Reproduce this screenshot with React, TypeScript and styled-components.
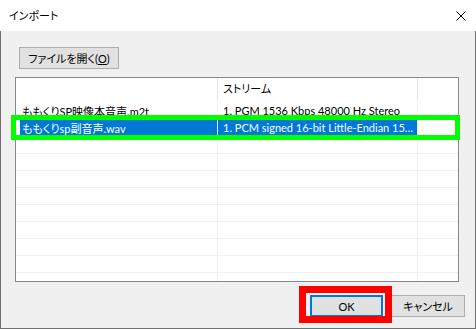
import React from 'react';
import styled, { createGlobalStyle } from 'styled-components';

interface FileRow {
    name: string;
    stream: string;
    selected?: boolean;
}

const files: FileRow[] = [
    { name: 'ももくりSP映像本音声.m2t', stream: '1. PGM 1536 Kbps 48000 Hz Stereo' },
    { name: 'ももくりsp副音声.wav', stream: '1. PCM signed 16-bit Little-Endian 15…', selected: true },
];

const ROW_COUNT = 11;

const App: React.FC = () => {
    const rows: FileRow[] = [...files];
    while (rows.length < ROW_COUNT) {
        rows.push({ name: '', stream: '' });
    }

    return (
        <>
            <GlobalStyle />
            <Window>
                <TitleBar>
                    <Title>インポート</Title>
                    <CloseButton aria-label="閉じる">
                        <svg width="10" height="10" viewBox="0 0 10 10">
                            <path d="M0.5 0.5 L9.5 9.5 M9.5 0.5 L0.5 9.5" stroke="#000" strokeWidth="1" />
                        </svg>
                    </CloseButton>
                </TitleBar>

                <Body>
                    <OpenButton>
                        ファイルを開く(<u>O</u>)
                    </OpenButton>

                    <ListBox>
                        <HeaderRow>
                            <HeaderCell />
                            <HeaderCell>ストリーム</HeaderCell>
                            <HeaderCell />
                        </HeaderRow>

                        {rows.map((row, key) =>
                            <Row key={key}>
                                <NameCell>
                                    <CellText $selected={row.selected}>{row.name}</CellText>
                                </NameCell>
                                <StreamCell>
                                    <CellText $selected={row.selected} $pad={5}>{row.stream}</CellText>
                                </StreamCell>
                                <EmptyCell />
                            </Row>
                        )}
                    </ListBox>

                    <Footer>
                        <PushButton $default>OK</PushButton>
                        <PushButton>キャンセル</PushButton>
                    </Footer>
                </Body>

                <Marker $color="#00ff00" $left={11} $top={115} $width={449} $height={25} $thickness={5} />
                <Marker $color="#ff0000" $left={299} $top={286} $width={93} $height={37} $thickness={7} />
            </Window>
        </>
    );
};

const uiFont = `"Lato", "Noto Sans CJK JP", sans-serif`;

const GlobalStyle = createGlobalStyle`
    html, body {
        margin: 0;
        padding: 0;
        background: #ffffff;
    }

    body {
        font-family: ${uiFont};
        font-size: 11px;
        color: #000000;
    }
`;

const Window = styled.div`
    position: relative;
    display: flex;
    flex-direction: column;
    width: 476px;
    height: 329px;
    box-sizing: border-box;
    overflow: hidden;
`;

const TitleBar = styled.div`
    display: flex;
    align-items: center;
    justify-content: space-between;
    height: 31px;
    padding: 0 10px 1px 9px;
    box-sizing: border-box;
    background: #ffffff;
`;

const Title = styled.span`
    font-family: "Noto Sans CJK JP", sans-serif;
    font-feature-settings: "palt";
    font-size: 11px;
`;

const CloseButton = styled.span`
    display: flex;
    width: 10px;
    height: 10px;
    margin-top: 1px;
`;

const Body = styled.div`
    flex: 1;
    display: flex;
    flex-direction: column;
    padding: 16px 10px 0 14px;
    background: #f0f0f0;
    border: 1px solid #6f6f6f;
    border-top: none;
`;

const buttonBase = `
    display: flex;
    align-items: center;
    justify-content: center;
    height: 22px;
    box-sizing: border-box;
    padding: 0;
    background: #e1e1e1;
    font-family: ${uiFont};
    font-feature-settings: "palt";
    font-size: 11px;
    color: #000000;
`;

const OpenButton = styled.button`
    ${buttonBase}
    width: 100px;
    margin-left: 4px;
    border: 1px solid #adadad;

    u {
        text-underline-offset: 1px;
    }
`;

const ListBox = styled.div`
    height: 205px;
    margin-top: 8px;
    width: 444px;
    box-sizing: border-box;
    border: 1px solid #828790;
    background: #ffffff;
    overflow: hidden;
`;

const columns = `
    display: grid;
    grid-template-columns: 202px 200px 1fr;
`;

const HeaderRow = styled.div`
    ${columns}
    height: 25px;
`;

const HeaderCell = styled.div`
    display: flex;
    align-items: center;
    padding: 0 0 2px 5px;
    border-right: 1px solid #e5e5e5;
    margin-bottom: 3px;
    font-family: "Noto Sans CJK JP", sans-serif;
    font-feature-settings: "palt";

    &:last-child {
        border-right: none;
    }
`;

const Row = styled.div`
    ${columns}
    height: 17px;
    box-sizing: border-box;
    border-bottom: 1px solid #f0f0f0;
`;

const NameCell = styled.div`
    display: flex;
    padding-left: 4px;
    border-right: 1px solid #f0f0f0;
    min-width: 0;
`;

const StreamCell = styled.div`
    display: flex;
    border-right: 1px solid #f0f0f0;
    min-width: 0;
`;

const EmptyCell = styled.div``;

const CellText = styled.span<{ $selected?: boolean; $pad?: number }>`
    flex: 1;
    display: flex;
    align-items: center;
    height: 17px;
    margin-top: -1px;
    padding-left: ${p => p.$pad ?? 2}px;
    white-space: nowrap;
    overflow: hidden;
    font-feature-settings: "palt";
    background: ${p => p.$selected ? '#0078d7' : 'transparent'};
    color: ${p => p.$selected ? '#ffffff' : '#000000'};
`;

const Footer = styled.div`
    display: flex;
    justify-content: flex-end;
    gap: 8px;
    margin-top: 13px;
`;

const PushButton = styled.button<{ $default?: boolean }>`
    ${buttonBase}
    width: ${p => p.$default ? 73 : 74}px;
    border: ${p => p.$default ? '2px solid #0078d7' : '1px solid #adadad'};
`;

const Marker = styled.div<{
    $color: string;
    $left: number;
    $top: number;
    $width: number;
    $height: number;
    $thickness: number;
}>`
    position: absolute;
    left: ${p => p.$left}px;
    top: ${p => p.$top}px;
    width: ${p => p.$width}px;
    height: ${p => p.$height}px;
    box-sizing: border-box;
    border: ${p => p.$thickness}px solid ${p => p.$color};
    pointer-events: none;
`;

export default App;
